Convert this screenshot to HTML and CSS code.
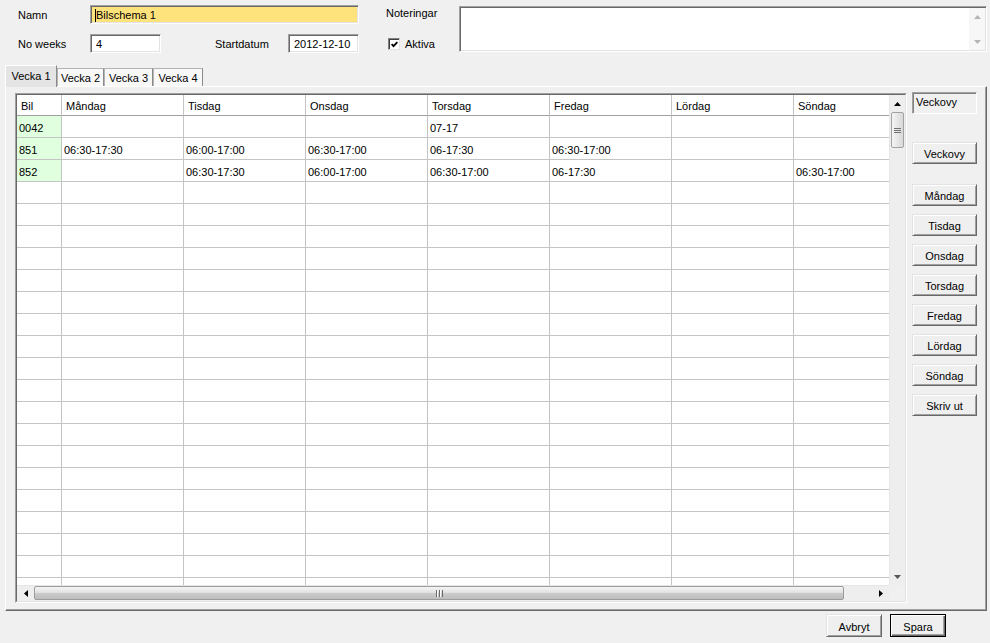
FILE: index.html
```html
<!DOCTYPE html>
<html lang="sv">
<head>
<meta charset="utf-8">
<title>Bilschema</title>
<link rel="stylesheet" href="styles.css">
</head>
<body>
<div class="form">
  <span class="lbl l-namn">Namn</span>
  <div class="field yellow f-namn"><span class="caret"></span>Bilschema 1</div>
  <span class="lbl l-not">Noteringar</span>
  <div class="notes">
    <div class="notes-scroll">
      <svg width="7" height="4" viewBox="0 0 7 4"><polygon points="0,4 7,4 3.5,0" fill="#b4b4b4"/></svg>
      <svg width="7" height="4" viewBox="0 0 7 4"><polygon points="0,0 7,0 3.5,4" fill="#b4b4b4"/></svg>
    </div>
  </div>
  <span class="lbl l-weeks">No weeks</span>
  <div class="field f-weeks">4</div>
  <span class="lbl l-start">Startdatum</span>
  <div class="field f-start">2012-12-10</div>
  <div class="check">
    <span class="box"><svg width="11" height="11" viewBox="0 0 11 11"><path d="M2 5 L4.3 7.5 L9 2.5" fill="none" stroke="#000" stroke-width="2.2"/></svg></span>
    <span>Aktiva</span>
  </div>
</div>

<div class="tabs">
  <div class="tab sel">Vecka 1</div>
  <div class="tab t2">Vecka 2</div>
  <div class="tab t3">Vecka 3</div>
  <div class="tab t4">Vecka 4</div>
</div>

<div class="panel">
  <div class="gridwrap">
    <div class="gridinner">
      <div class="cells">
        <div class="row head"><span class="c">Bil</span><span class="c">Måndag</span><span class="c">Tisdag</span><span class="c">Onsdag</span><span class="c">Torsdag</span><span class="c">Fredag</span><span class="c">Lördag</span><span class="c">Söndag</span></div>
        <div class="row"><span class="c bil">0042</span><span class="c"></span><span class="c"></span><span class="c"></span><span class="c">07-17</span><span class="c"></span><span class="c"></span><span class="c"></span></div>
        <div class="row"><span class="c bil">851</span><span class="c">06:30-17:30</span><span class="c">06:00-17:00</span><span class="c">06:30-17:00</span><span class="c">06-17:30</span><span class="c">06:30-17:00</span><span class="c"></span><span class="c"></span></div>
        <div class="row"><span class="c bil">852</span><span class="c"></span><span class="c">06:30-17:30</span><span class="c">06:00-17:00</span><span class="c">06:30-17:00</span><span class="c">06-17:30</span><span class="c"></span><span class="c">06:30-17:00</span></div>
        <div class="row"><span class="c"></span><span class="c"></span><span class="c"></span><span class="c"></span><span class="c"></span><span class="c"></span><span class="c"></span><span class="c"></span></div>
        <div class="row"><span class="c"></span><span class="c"></span><span class="c"></span><span class="c"></span><span class="c"></span><span class="c"></span><span class="c"></span><span class="c"></span></div>
        <div class="row"><span class="c"></span><span class="c"></span><span class="c"></span><span class="c"></span><span class="c"></span><span class="c"></span><span class="c"></span><span class="c"></span></div>
        <div class="row"><span class="c"></span><span class="c"></span><span class="c"></span><span class="c"></span><span class="c"></span><span class="c"></span><span class="c"></span><span class="c"></span></div>
        <div class="row"><span class="c"></span><span class="c"></span><span class="c"></span><span class="c"></span><span class="c"></span><span class="c"></span><span class="c"></span><span class="c"></span></div>
        <div class="row"><span class="c"></span><span class="c"></span><span class="c"></span><span class="c"></span><span class="c"></span><span class="c"></span><span class="c"></span><span class="c"></span></div>
        <div class="row"><span class="c"></span><span class="c"></span><span class="c"></span><span class="c"></span><span class="c"></span><span class="c"></span><span class="c"></span><span class="c"></span></div>
        <div class="row"><span class="c"></span><span class="c"></span><span class="c"></span><span class="c"></span><span class="c"></span><span class="c"></span><span class="c"></span><span class="c"></span></div>
        <div class="row"><span class="c"></span><span class="c"></span><span class="c"></span><span class="c"></span><span class="c"></span><span class="c"></span><span class="c"></span><span class="c"></span></div>
        <div class="row"><span class="c"></span><span class="c"></span><span class="c"></span><span class="c"></span><span class="c"></span><span class="c"></span><span class="c"></span><span class="c"></span></div>
        <div class="row"><span class="c"></span><span class="c"></span><span class="c"></span><span class="c"></span><span class="c"></span><span class="c"></span><span class="c"></span><span class="c"></span></div>
        <div class="row"><span class="c"></span><span class="c"></span><span class="c"></span><span class="c"></span><span class="c"></span><span class="c"></span><span class="c"></span><span class="c"></span></div>
        <div class="row"><span class="c"></span><span class="c"></span><span class="c"></span><span class="c"></span><span class="c"></span><span class="c"></span><span class="c"></span><span class="c"></span></div>
        <div class="row"><span class="c"></span><span class="c"></span><span class="c"></span><span class="c"></span><span class="c"></span><span class="c"></span><span class="c"></span><span class="c"></span></div>
        <div class="row"><span class="c"></span><span class="c"></span><span class="c"></span><span class="c"></span><span class="c"></span><span class="c"></span><span class="c"></span><span class="c"></span></div>
        <div class="row"><span class="c"></span><span class="c"></span><span class="c"></span><span class="c"></span><span class="c"></span><span class="c"></span><span class="c"></span><span class="c"></span></div>
        <div class="row"><span class="c"></span><span class="c"></span><span class="c"></span><span class="c"></span><span class="c"></span><span class="c"></span><span class="c"></span><span class="c"></span></div>
        <div class="row"><span class="c"></span><span class="c"></span><span class="c"></span><span class="c"></span><span class="c"></span><span class="c"></span><span class="c"></span><span class="c"></span></div>
        <div class="row"><span class="c"></span><span class="c"></span><span class="c"></span><span class="c"></span><span class="c"></span><span class="c"></span><span class="c"></span><span class="c"></span></div>
      </div>
      <div class="vscroll">
        <div class="sbtn v-up"><svg width="7" height="4" viewBox="0 0 7 4"><polygon points="0,4 7,4 3.5,0" fill="#000"/></svg></div>
        <div class="vthumb"><span class="vgrip"></span></div>
        <div class="vtrack"></div>
        <div class="sbtn v-down"><svg width="7" height="4" viewBox="0 0 7 4"><polygon points="0,0 7,0 3.5,4" fill="#555"/></svg></div>
      </div>
      <div class="hscroll">
        <div class="sbtn h-left"><svg width="4" height="7" viewBox="0 0 4 7"><polygon points="4,0 4,7 0,3.5" fill="#000"/></svg></div>
        <div class="hthumb"><span class="hgrip"></span></div>
        <div class="htrack"></div>
        <div class="sbtn h-right"><svg width="4" height="7" viewBox="0 0 4 7"><polygon points="0,0 0,7 4,3.5" fill="#000"/></svg></div>
      </div>
      <div class="corner"></div>
    </div>
  </div>
  <div class="side">
    <div class="sidelabel">Veckovy</div>
    <button class="btn b-veckovy">Veckovy</button>
    <button class="btn b-first">Måndag</button>
    <button class="btn">Tisdag</button>
    <button class="btn">Onsdag</button>
    <button class="btn">Torsdag</button>
    <button class="btn">Fredag</button>
    <button class="btn">Lördag</button>
    <button class="btn">Söndag</button>
    <button class="btn">Skriv ut</button>
  </div>
</div>

<div class="footer">
  <button class="btn b-avbryt">Avbryt</button>
  <button class="btn b-spara">Spara</button>
</div>
</body>
</html>
```
FILE: styles.css
```css
* { box-sizing: border-box; margin: 0; padding: 0; }
html, body { width: 990px; height: 643px; overflow: hidden; }
body {
  background: #f0f0f0;
  font-family: "Liberation Sans", Arial, sans-serif;
  font-size: 11px;
  color: #000;
}

/* ---------- top form ---------- */
.form {
  display: grid;
  grid-template-columns: 72px 71px 54px 73px 71px 27px 73px 528px;
  grid-template-rows: 19px 19px;
  row-gap: 10px;
  padding: 5px 0 0 18px;
}
.lbl { align-self: center; white-space: nowrap; padding-top: 1px; }
.l-namn { grid-column: 1; grid-row: 1; }
.l-not { grid-column: 7; grid-row: 1; align-self: start; margin-top: 2px; padding-top: 0; }
.l-weeks { grid-column: 1; grid-row: 2; }
.l-start { grid-column: 4; grid-row: 2; }

.field {
  display: flex;
  align-items: center;
  padding: 1px 0 0 5px;
  background: #fff;
  border: 1px solid;
  border-color: #a0a0a0 #fff #fff #a0a0a0;
  box-shadow: inset 1px 1px 0 #696969, inset -1px -1px 0 #e3e3e3;
  white-space: nowrap;
}
.yellow { background: #fee27c; }
.f-namn { grid-column: 2 / 6; grid-row: 1; }
.f-weeks { grid-column: 2; grid-row: 2; }
.f-start { grid-column: 5; grid-row: 2; }
.caret { display: inline-block; width: 1px; height: 13px; background: #000; margin-left: -1px; }

.notes {
  grid-column: 8;
  grid-row: 1 / 3;
  margin: 1px 0;
  background: #fff;
  border: 1px solid;
  border-color: #a0a0a0 #fff #fff #a0a0a0;
  box-shadow: inset 1px 1px 0 #696969, inset -1px -1px 0 #e3e3e3;
  display: flex;
  justify-content: flex-end;
  padding: 1px;
}
.notes-scroll {
  width: 16px;
  display: flex;
  flex-direction: column;
  justify-content: space-between;
  align-items: center;
  padding: 7px 0 6px;
  background: #f7f7f7;
}

.check {
  grid-column: 7;
  grid-row: 2;
  display: flex;
  align-items: center;
  gap: 5px;
  margin-left: 2px;
}
.check span:last-child { padding-top: 1px; }
.box {
  width: 12px;
  height: 12px;
  background: #fff;
  border: 1px solid;
  border-color: #808080 #e3e3e3 #e3e3e3 #808080;
  box-shadow: inset 1px 1px 0 #404040;
  display: flex;
  align-items: center;
  justify-content: center;
}
.box svg { display: block; margin: 1px 0 0 1px; }

/* ---------- tabs ---------- */
.tabs {
  display: flex;
  align-items: flex-end;
  height: 23px;
  margin-top: 10px;
  padding-left: 5px;
}
.tab {
  height: 18px;
  border: 1px solid #b4b4b4;
  border-right-color: #8a8a8a;
  border-bottom: 0;
  background: #f8f8f8;
  display: flex;
  align-items: center;
  justify-content: center;
  white-space: nowrap;
  padding-top: 1px;
}
.tab.sel {
  width: 52px;
  height: 22px;
  background: #e4e4e4;
  border-color: #fff #8a8a8a #fff #fff;
  position: relative;
  margin-bottom: -1px;
  z-index: 1;
  padding-top: 0;
  padding-bottom: 1px;
}
.t2 { width: 47px; }
.t3 { width: 49px; }
.t4 { width: 50px; }

/* ---------- panel ---------- */
.panel {
  display: flex;
  align-items: flex-start;
  margin-left: 5px;
  width: 982px;
  height: 525px;
  padding: 6px 0 0 9px;
  border: 1px solid;
  border-color: #fff #696969 #696969 #fff;
  box-shadow: inset -1px -1px 0 #a0a0a0;
}

.gridwrap {
  width: 892px;
  height: 510px;
  border: 1px solid;
  border-color: #a0a0a0 #fff #fff #a0a0a0;
}
.gridinner {
  width: 100%;
  height: 100%;
  border: 1px solid;
  border-color: #696969 #e3e3e3 #e3e3e3 #696969;
  display: grid;
  grid-template-columns: 872px 16px;
  grid-template-rows: 490px 16px;
}
.cells {
  overflow: hidden;
  background: #fff;
}
.row {
  display: flex;
  height: 22px;
}
.c {
  flex: 0 0 122px;
  height: 22px;
  border-right: 1px solid #c4c4c4;
  border-bottom: 1px solid #c4c4c4;
  display: flex;
  align-items: center;
  padding: 2px 0 0 2px;
  white-space: nowrap;
}
.c:first-child { flex-basis: 45px; }
.head { height: 21px; }
.head .c {
  height: 21px;
  padding-left: 4px;
  border-bottom-color: #a0a0a0;
}
.bil { background: #dfffdf; }

/* scrollbars */
.vscroll {
  display: flex;
  flex-direction: column;
  background: #eeeeee;
  border-left: 1px solid #e6e6e6;
}
.sbtn {
  display: flex;
  align-items: center;
  justify-content: center;
}
.sbtn svg { display: block; }
.v-up, .v-down { height: 17px; }
.vthumb {
  height: 36px;
  margin: 0 1px 0 1px;
  border: 1px solid #a2a2a2;
  border-radius: 2px;
  background: linear-gradient(to right, #f4f4f4, #e6e6e6 50%, #d8d8d8);
  display: flex;
  align-items: center;
  justify-content: center;
}
.vgrip {
  width: 7px;
  height: 5px;
  background: repeating-linear-gradient(to bottom, #707070 0 1px, transparent 1px 2px);
}
.vtrack { flex: 1; }

.hscroll {
  display: flex;
  background: #eeeeee;
  border-top: 1px solid #e6e6e6;
}
.h-left { width: 17px; }
.h-right { width: 17px; }
.hthumb {
  width: 810px;
  margin: 0 0 1px 0;
  border: 1px solid #9c9c9c;
  border-radius: 2px;
  background: linear-gradient(to bottom, #f4f4f4, #e2e2e2 45%, #cacaca 55%, #bdbdbd);
  display: flex;
  align-items: center;
  justify-content: center;
}
.hgrip {
  width: 7px;
  height: 7px;
  background: repeating-linear-gradient(to right, #6a6a6a 0 1px, #fafafa 1px 2px, transparent 2px 3px);
}
.htrack { flex: 1; }
.corner { background: #f0f0f0; }

/* side buttons */
.side {
  width: 65px;
  margin-left: 5px;
  margin-top: -1px;
  display: flex;
  flex-direction: column;
}
.sidelabel {
  height: 22px;
  padding: 3px 0 0 3px;
  border: 1px solid;
  border-color: #a0a0a0 #fff #fff #a0a0a0;
  box-shadow: inset 1px 1px 0 #808080;
  line-height: 13px;
}
.btn {
  font: inherit;
  color: #000;
  height: 22px;
  width: 65px;
  background: #efefef;
  border: 1px solid;
  border-color: #e3e3e3 #696969 #696969 #e3e3e3;
  box-shadow: inset 1px 1px 0 #fff, inset -1px -1px 0 #a0a0a0;
  display: flex;
  align-items: center;
  justify-content: center;
  padding-top: 2px;
  margin-top: 8px;
}
.b-veckovy { margin-top: 28px; }
.b-first { margin-top: 20px; }

/* footer */
.footer {
  display: flex;
  justify-content: flex-end;
  gap: 8px;
  padding: 3px 44px 0 0;
}
.footer .btn { margin-top: 0; height: 23px; }
.b-avbryt { width: 56px; }
.b-spara {
  width: 56px;
  border-color: #000;
  box-shadow: inset 1px 1px 0 #fff, inset -1px -1px 0 #696969, inset -2px -2px 0 #a0a0a0;
}
```
